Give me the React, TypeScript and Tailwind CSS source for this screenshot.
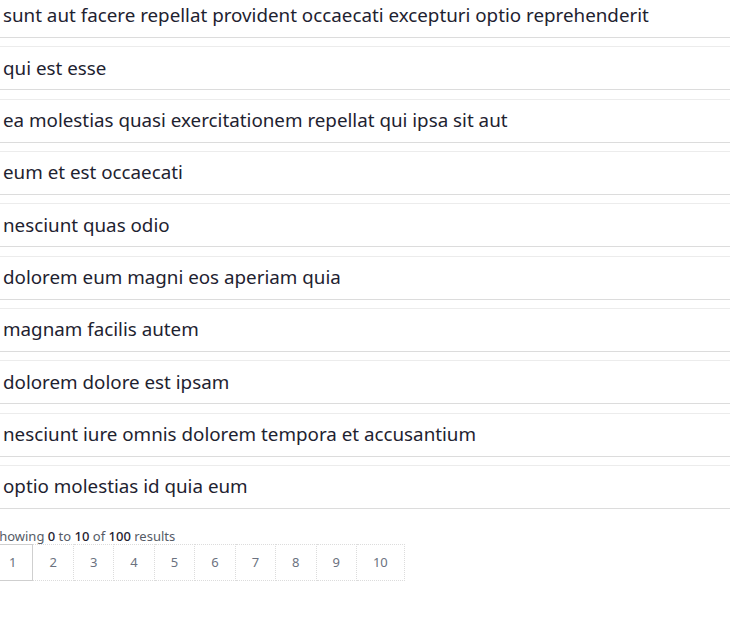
import React from "react";

const posts = [
  "sunt aut facere repellat provident occaecati excepturi optio reprehenderit",
  "qui est esse",
  "ea molestias quasi exercitationem repellat qui ipsa sit aut",
  "eum et est occaecati",
  "nesciunt quas odio",
  "dolorem eum magni eos aperiam quia",
  "magnam facilis autem",
  "dolorem dolore est ipsam",
  "nesciunt iure omnis dolorem tempora et accusantium",
  "optio molestias id quia eum",
];

const pages = [1, 2, 3, 4, 5, 6, 7, 8, 9, 10];

export default function App() {
  return (
    <div className="min-h-screen bg-white overflow-hidden" style={{ fontFamily: '"Noto Sans", "Open Sans", sans-serif' }}>
      {/* lista de posts */}
      <div className="-ml-2 -mt-[6px]">
        <ul>
          {posts.map((title) => (
            <li
              key={title}
              className="h-[44px] mb-[8.33px] border-t border-b border-t-[#ececec] border-b-[#dcdcdc] border-b-dotted pl-[11px] flex items-end pb-[12px] text-[18.8px] leading-none text-[#1e2230]"
            >
              {title}
            </li>
          ))}
        </ul>

        {/* paginación */}
        <div className="mt-[19px] text-[13px] text-[#555b66] leading-4">
          Showing <span className="font-medium text-[#1f2230]">0</span> to{" "}
          <span className="font-medium text-[#1f2230]">10</span> of{" "}
          <span className="font-medium text-[#1f2230]">100</span> results
        </div>
        <div className="flex">
          {pages.map((p) => (
            <button
              key={p}
              className={
                p === 1
                  ? "h-[37px] px-4 text-[13px] text-[#6b7280] border border-[#cfcfcf] border-solid"
                  : "h-[37px] px-4 text-[13px] text-[#6b7280] border border-l-0 border-[#dcdcdc] border-dotted"
              }
            >
              {p}
            </button>
          ))}
        </div>
      </div>
    </div>
  );
}
